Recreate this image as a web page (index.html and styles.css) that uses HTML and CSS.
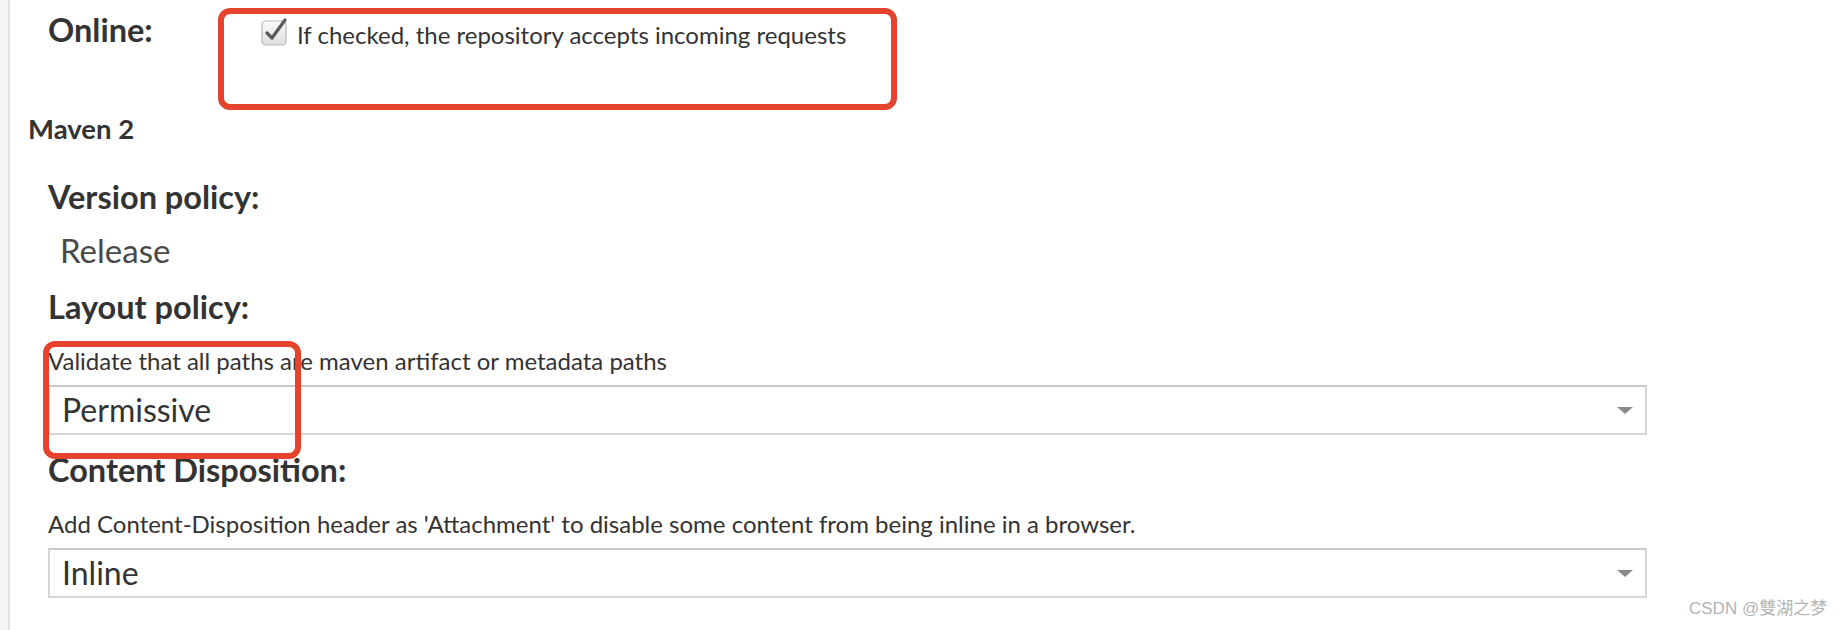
FILE: index.html
```html
<!DOCTYPE html>
<html lang="en">
<head>
<meta charset="utf-8">
<title>Repository settings</title>
<link rel="stylesheet" href="styles.css">
</head>
<body>
<div class="page">
  <div class="rail"></div>
  <main class="content">
    <div class="online-row">
      <div class="online-label">Online:</div>
      <label class="check">
        <svg class="check-box" width="28" height="28" viewBox="0 0 28 28" aria-hidden="true">
          <defs>
            <linearGradient id="cbg" x1="0" y1="0" x2="0" y2="1">
              <stop offset="0" stop-color="#fbfbfb"/>
              <stop offset="1" stop-color="#dedede"/>
            </linearGradient>
          </defs>
          <rect x="1" y="3" width="24" height="24" rx="4" fill="url(#cbg)" stroke="#b9b9b9" stroke-width="1.2"/>
          <path d="M6 15 L11 20 L24 2" fill="none" stroke="#5a5a5a" stroke-width="3.2" stroke-linecap="round" stroke-linejoin="round"/>
        </svg>
        <span class="check-text">If checked, the repository accepts incoming requests</span>
      </label>
    </div>

    <h3 class="section">Maven 2</h3>

    <div class="field-label version">Version policy:</div>
    <div class="static-value">Release</div>

    <div class="field-label layout">Layout policy:</div>
    <div class="help">Validate that all paths are maven artifact or metadata paths</div>
    <div class="select">
      <span class="select-value">Permissive</span>
      <span class="caret"></span>
    </div>

    <div class="field-label disposition">Content Disposition:</div>
    <div class="help">Add Content-Disposition header as 'Attachment' to disable some content from being inline in a browser.</div>
    <div class="select">
      <span class="select-value">Inline</span>
      <span class="caret"></span>
    </div>
  </main>
</div>

<div class="mark mark-online"></div>
<div class="mark mark-layout"></div>
<div class="watermark">CSDN @雙湖之梦</div>
</body>
</html>
```

FILE: styles.css
```css
html, body {
  margin: 0;
  padding: 0;
  background: #ffffff;
}

body {
  font-family: Lato, "Open Sans", "Liberation Sans", sans-serif;
  color: #333333;
  width: 1842px;
  height: 630px;
  overflow: hidden;
  position: relative;
}

.page {
  display: flex;
  height: 630px;
}

.rail {
  width: 8px;
  flex: none;
  background: #f4f4f4;
  border-right: 2px solid #e4e4e4;
}

.content {
  flex: none;
  width: 1620px;
  padding-left: 18px;
}

.online-row {
  display: flex;
  align-items: flex-start;
  height: 100px;
  padding-left: 20px;
}

.online-label {
  width: 213px;
  flex: none;
  margin-top: 12px;
  font-size: 32.5px;
  line-height: 36px;
  font-weight: 700;
  color: #333;
}

.check {
  display: flex;
  align-items: flex-start;
  margin-top: 18px;
}

.check-box {
  flex: none;
  display: block;
}

.check-text {
  margin-left: 8px;
  margin-top: 4px;
  font-size: 24px;
  line-height: 26px;
  color: #333;
}

.section {
  margin: 15px 0 0 0;
  font-size: 27.5px;
  line-height: 28px;
  font-weight: 700;
  color: #333;
}

.field-label {
  margin-left: 20px;
  font-size: 32.5px;
  line-height: 36px;
  font-weight: 700;
  color: #333;
}

.field-label.version { margin-top: 36px; }
.field-label.layout { margin-top: 23px; }
.field-label.disposition { margin-top: 17px; }

.static-value {
  margin: 19px 0 0 32px;
  font-size: 33px;
  line-height: 32px;
  color: #484848;
}

.help {
  margin: 23px 0 0 20px;
  font-size: 24px;
  line-height: 26px;
  color: #333;
}

.select {
  box-sizing: border-box;
  margin: 11px 0 0 20px;
  width: 1599px;
  height: 50px;
  border: 2px solid #d6d6d6;
  border-top-color: #c9c9c9;
  display: flex;
  align-items: center;
  justify-content: space-between;
  padding: 0 12px 0 12px;
  background: #fff;
}

.select-value {
  font-size: 32px;
  line-height: 34px;
  color: #333;
}

.caret {
  width: 0;
  height: 0;
  border-left: 8px solid transparent;
  border-right: 8px solid transparent;
  border-top: 7px solid #8a8a8a;
}

.mark {
  position: absolute;
  box-sizing: border-box;
  border: 6px solid #e5432d;
  border-radius: 12px;
}

.mark-online {
  left: 218px;
  top: 8px;
  width: 679px;
  height: 102px;
}

.mark-layout {
  left: 43px;
  top: 341px;
  width: 258px;
  height: 118px;
}

.watermark {
  position: absolute;
  left: 1689px;
  top: 598px;
  font-family: "Liberation Sans", "Noto Sans CJK SC", sans-serif;
  font-size: 17px;
  line-height: 22px;
  color: #b4b4b4;
  white-space: nowrap;
}
```
